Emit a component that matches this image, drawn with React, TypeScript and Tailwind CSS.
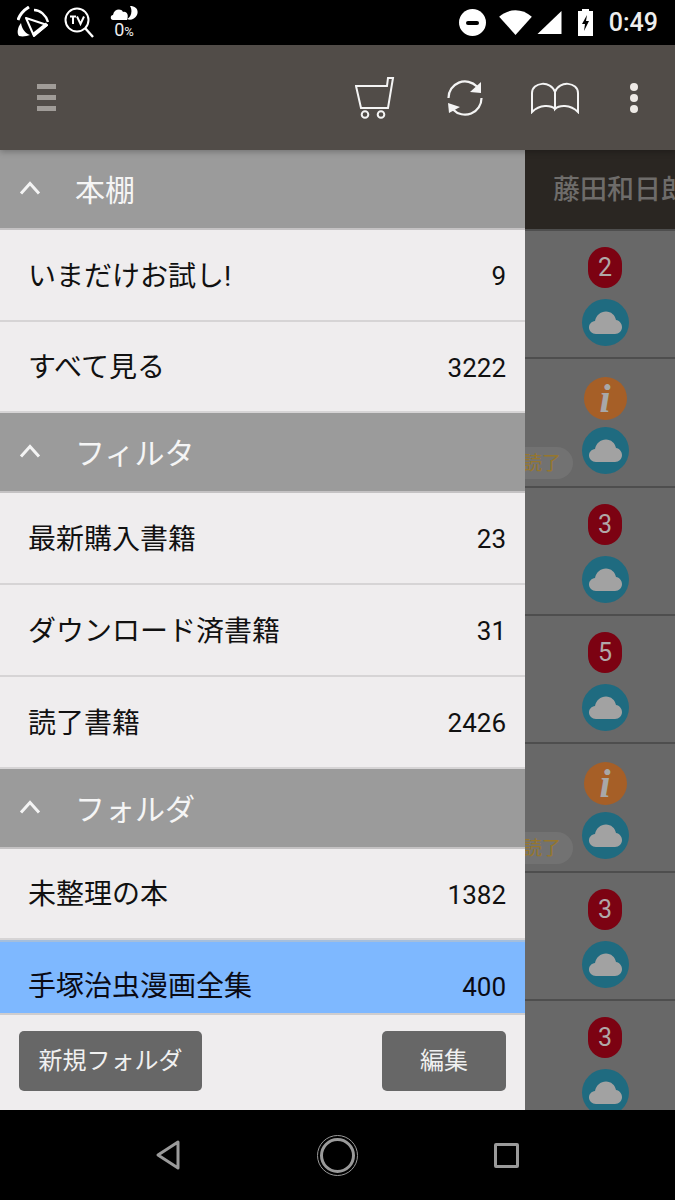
const jp = "font-['Roboto','Noto_Sans_CJK_JP',sans-serif]"

function Chevron() {
  return (
    <svg width="22" height="14" viewBox="0 0 22 14" className="shrink-0 -mt-[5px]">
      <path d="M2 12.500 L11 2.500 L20 12.500" fill="none" stroke="#f4f4f4" strokeWidth="3" />
    </svg>
  )
}

function SectionHeader({ title }: { title: string }) {
  return (
    <div className="h-[80px] shrink-0 gap-[34px] flex items-center pl-[19px] pt-[3px] border-b-2 border-[#c4c2c3] bg-[#9b9b9b] text-[30px] text-[#f5f5f5]">
      <Chevron />
      <span>{title}</span>
    </div>
  )
}

function Row({ label, count, h }: { label: string; count: string; h: string }) {
  return (
    <div className={`${h} shrink-0 flex items-center justify-between pl-[28px] pr-[19px] pt-[3px] border-b-2 border-[#d6d4d5] text-[28px] text-[#111]`}>
      <span>{label}</span>
      <span className="text-[26px] font-['Roboto',sans-serif]">{count}</span>
    </div>
  )
}

function Cloud() {
  return (
    <div className="w-[47px] h-[47px] rounded-full bg-[#1f6b80] flex items-center justify-center">
      <svg width="33" height="23" viewBox="0 0 33 23">
        <path
          d="M7 23 C3 23 0 20 0 16.500 C0 13 2.500 10.500 6 10 C7 4.500 11.500 0.500 17 0.500 C22 0.500 26 4 27 9 C30.500 9.500 33 12.500 33 16 C33 20 30 23 26 23 Z"
          fill="#a2a2a2"
        />
      </svg>
    </div>
  )
}

function BookRow({ badge, read, h }: { badge: string; read?: boolean; h: string }) {
  return (
    <div className={`${h} relative shrink-0 flex flex-col items-center border-t-2 border-[#4e4e4e] pl-[10px]`}>
      {badge === "i" ? (
        <div className="mt-[18px] w-[43px] h-[43px] rounded-full bg-[#a65f27] flex items-center justify-center text-[40px] leading-none italic font-bold font-['Liberation_Serif',serif] text-[#a8a8a8]">
          i
        </div>
      ) : (
        <div className="mt-[16px] w-[34px] h-[41px] rounded-[17px] bg-[#7c0212] flex items-center justify-center text-[25px] text-[#b0a8a8] font-['Roboto',sans-serif]">
          {badge}
        </div>
      )}
      <div className={badge === "i" ? "mt-[7px]" : "mt-[11px]"}>
        <Cloud />
      </div>
      {read && (
        <div className="absolute left-[-14px] top-[88px] w-[62px] h-[32px] pt-[2px] rounded-full bg-[#727272] flex items-center justify-center text-[19px] text-[#96772d]">
          読了
        </div>
      )}
    </div>
  )
}

export default function App() {
  return (
    <div className={`${jp} w-[675px] h-[1200px] bg-black flex flex-col overflow-hidden`}>
      {/* status bar */}
      <div className="h-[45px] shrink-0 flex items-center justify-between pl-[17px] pr-[17px] text-white">
        <div className="flex items-center gap-[13px]">
          <svg width="34" height="34" viewBox="0 0 34 34" fill="none">
            <path d="M9 12 L30 19 L17 30 Z" stroke="#fff" strokeWidth="2" strokeLinejoin="round" />
            <path d="M16 29 L30 18" stroke="#fff" strokeWidth="3.500" />
            <path d="M1 14 C3 8 7 4 12 1" stroke="#fff" strokeWidth="3" />
            <path d="M17 4 C23 4 29 9 31 16" stroke="#fff" strokeWidth="2.400" />
            <path d="M4 17 C0 22 0 28 2 30 C6 31 10 30 13 29 C8 27 5 23 4 17 Z" fill="#fff" />
          </svg>
          <svg width="30" height="32" viewBox="0 0 30 32" fill="none">
            <circle cx="13" cy="13" r="11.500" stroke="#fff" strokeWidth="2" />
            <path d="M21 21 L29 30" stroke="#fff" strokeWidth="2.4" />
            <path d="M6 9.500 H12 M9 9.500 V17 M13 9.500 L16.500 17 L20 9.500" stroke="#fff" strokeWidth="2" />
          </svg>
          <div className="flex flex-col items-center ml-[3px]">
            <svg width="28" height="15" viewBox="0 0 28 15">
              <path d="M3 14 C0 14 0 9 3 9 C4 3 11 2 13 6 C17 5 19 9 17 14 Z" fill="#fff" />
              <path d="M20 0 C26 0 29 4 27 9 C25 13 20 15 17 13 C21 11 23 5 20 0 Z" fill="#fff" />
            </svg>
            <span className="text-[18px] leading-[17px] font-['Roboto',sans-serif] text-[#eee]">
              0<span className="text-[13px]">%</span>
            </span>
          </div>
        </div>
        <div className="flex items-center">
          <div className="w-[27px] h-[27px] rounded-full bg-white flex items-center justify-center mr-[13px]">
            <div className="w-[13px] h-[4px] bg-black rounded-sm" />
          </div>
          <svg width="33" height="25" viewBox="0 0 34 26" className="mr-[5px]">
            <path d="M0 7 C10 -2 24 -2 34 7 L17 26 Z" fill="#fff" />
          </svg>
          <svg width="25" height="24" viewBox="0 0 25 25" className="mr-[16px]">
            <path d="M0 24 L25 0 V24 Z" fill="#fff" />
          </svg>
          <svg width="15" height="27" viewBox="0 0 15 27" className="mr-[16px]">
            <path d="M4 0 H11 V2 H15 V27 H0 V2 H4 Z" fill="#fff" />
            <path d="M9 6 L4 15 H7 L6 22 L11 12 H8 Z" fill="#000" />
          </svg>
          <span className="text-[25px] font-['Roboto',sans-serif] font-medium text-[#eee]">0:49</span>
        </div>
      </div>

      {/* toolbar */}
      <div className="h-[105px] shrink-0 bg-[#514c48] flex items-center pl-[37px] relative z-10 shadow-[0_2px_6px_rgba(0,0,0,0.25)]">
        <div className="flex flex-col gap-[6px] w-[19px] mr-[299px]">
          <div className="h-[5px] bg-[#a09c98]" />
          <div className="h-[5px] bg-[#a09c98]" />
          <div className="h-[5px] bg-[#a09c98]" />
        </div>
        <svg width="40" height="44" viewBox="0 0 40 44" fill="none" className="mr-[52px]">
          <path d="M1 10 L6 32 H33 L38 2 H33 L32 10 Z" stroke="#f4f4f4" strokeWidth="2" />
          <circle cx="10" cy="38.500" r="3.300" stroke="#f4f4f4" strokeWidth="2" />
          <circle cx="26" cy="38.500" r="3.300" stroke="#f4f4f4" strokeWidth="2" />
        </svg>
        <svg width="36" height="36" viewBox="0 0 36 36" fill="none" className="mr-[48px]">
          <path d="M1.500 18 A16.500 16.500 0 0 1 30 6.600" stroke="#f4f4f4" strokeWidth="2.2" />
          <path d="M34.500 18 A16.500 16.500 0 0 1 6 29.500" stroke="#f4f4f4" strokeWidth="2.2" />
          <path d="M23 12 L34 2 V13 Z" fill="#f4f4f4" />
          <path d="M1 23 L13 27 L2 33 Z" fill="#f4f4f4" />
        </svg>
        <svg width="48" height="32" viewBox="0 0 48 32" fill="none" className="mr-[51px]">
          <path d="M24 27 C20 23 9 22 1 30 V11 C1 0 20 -2 24 10 C28 -2 47 0 47 11 V30 C39 22 28 23 24 27 V10" stroke="#f4f4f4" strokeWidth="2" />
        </svg>
        <div className="flex flex-col gap-[3px]">
          <div className="w-[8px] h-[8px] rounded-full bg-[#eeeae6]" />
          <div className="w-[8px] h-[8px] rounded-full bg-[#eeeae6]" />
          <div className="w-[8px] h-[8px] rounded-full bg-[#eeeae6]" />
        </div>
      </div>

      {/* body */}
      <div className="h-[960px] shrink-0 flex overflow-hidden">
        {/* drawer */}
        <div className="w-[525px] shrink-0 bg-[#efedee] flex flex-col relative z-[1]">
          <SectionHeader title="本棚" />
          <Row label="いまだけお試し!" count="9" h="h-[92px]" />
          <Row label="すべて見る" count="3222" h="h-[91px]" />
          <SectionHeader title="フィルタ" />
          <Row label="最新購入書籍" count="23" h="h-[92px]" />
          <Row label="ダウンロード済書籍" count="31" h="h-[92px]" />
          <Row label="読了書籍" count="2426" h="h-[92px]" />
          <SectionHeader title="フォルダ" />
          <Row label="未整理の本" count="1382" h="h-[91px]" />
          <div className="h-[73px] shrink-0 bg-[#7eb8ff] border-t-2 border-[#a4bedc] flex items-end justify-between pl-[28px] pr-[19px] pb-[6px] text-[28px] text-[#0a0a14] leading-[40px]">
            <span>手塚治虫漫画全集</span>
            <span className="text-[26px] font-['Roboto',sans-serif]">400</span>
          </div>
          <div className="flex-1 border-t-2 border-[#cfcdce] flex justify-between pl-[19px] pr-[19px] pt-[16px] text-[24px] text-[#f0f0f0]">
            <button className="w-[183px] h-[60px] rounded-[5px] bg-[#676767]">新規フォルダ</button>
            <button className="w-[124px] h-[60px] rounded-[5px] bg-[#676767]">編集</button>
          </div>
        </div>

        {/* dimmed list behind the drawer */}
        <div className="flex-1 min-w-0 flex flex-col bg-[#686868] overflow-hidden">
          <div className="h-[79px] shrink-0 bg-[#2a2622] flex items-center pl-[28px] pt-[2px] text-[27px] font-medium text-[#6e6c6a] whitespace-nowrap">
            藤田和日郎
          </div>
          <BookRow badge="2" h="h-[128px]" />
          <BookRow badge="i" read h="h-[129px]" />
          <BookRow badge="3" h="h-[128px]" />
          <BookRow badge="5" h="h-[128px]" />
          <BookRow badge="i" read h="h-[129px]" />
          <BookRow badge="3" h="h-[128px]" />
          <BookRow badge="3" h="h-[129px]" />
        </div>
      </div>

      {/* nav bar */}
      <div className="h-[90px] shrink-0 flex items-center pl-[156px]">
        <svg width="24" height="30" viewBox="0 0 24 30" fill="none" className="mr-[137px]">
          <path d="M22 2 V28 L2 15 Z" stroke="#9a9a9a" strokeWidth="3" strokeLinejoin="round" />
        </svg>
        <div className="w-[41px] h-[41px] rounded-full border border-[#9a9a9a] p-[2px] mr-[136px]">
          <div className="w-full h-full rounded-full border-[3px] border-[#9a9a9a]" />
        </div>
        <div className="w-[25px] h-[25px] rounded-[2px] border-[3px] border-[#9a9a9a]" />
      </div>
    </div>
  )
}
